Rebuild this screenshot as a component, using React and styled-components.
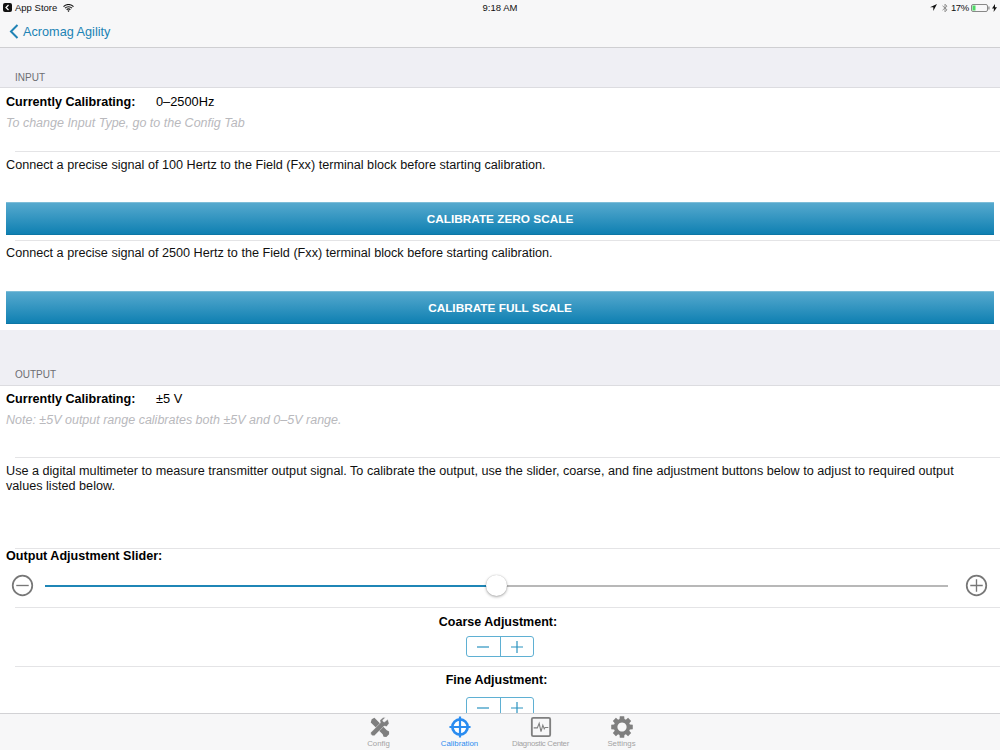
import React from "react";
import styled, { createGlobalStyle } from "styled-components";

const Global = createGlobalStyle`
  html, body { margin: 0; padding: 0; background: #fff; }
  body { font-family: "Liberation Sans", Arial, sans-serif; color: #000; }
`;

const Page = styled.div`
  width: 1000px; height: 750px; display: flex; flex-direction: column; overflow: hidden; background: #fff;
`;
const Header = styled.header`
  height: 47px; flex: none; background: #f7f7f8; border-bottom: 1px solid #cfcfd2; display: flex; flex-direction: column;
`;
const StatusBar = styled.div`
  height: 15px; display: grid; grid-template-columns: 1fr auto 1fr; align-items: center; padding: 0 3px; font-size: 9.5px; color: #111;
`;
const StatusGroup = styled.div`
  display: flex; align-items: center; gap: ${p => p.$gap || 3}px; justify-content: ${p => p.$end ? "flex-end" : "flex-start"};
`;
const NavBar = styled.div`
  flex: 1; display: flex; align-items: center; gap: 4px; padding: 1px 0 0 9px; color: #2083b5; font-size: 12.7px;
`;
const Content = styled.main`
  flex: 1; min-height: 0; overflow: hidden; display: flex; flex-direction: column;
`;
const SectionHeader = styled.div`
  flex: none; height: ${p => p.$h}px; background: #efeff4; border-bottom: 1px solid #dcdce0; display: flex; align-items: flex-end;
  padding: 0 15px ${p => p.$pb}px; box-sizing: border-box; font-size: 10px; color: #6d6d72; line-height: 12px;
`;
const Row = styled.div`
  flex: none; height: ${p => p.$h}px; box-sizing: border-box; padding: ${p => p.$pt || 0}px 6px 0;
  display: flex; flex-direction: column;
  ${p => p.$center && `align-items: center;`}
`;
const SliderBlock = styled.div`
  flex: none; height: 58px; display: flex; flex-direction: column;
`;
const Separator = styled.div`
  flex: none; height: 1px; margin-left: 15px; background: #e4e4e6;
`;
const CalLine = styled.div`
  display: flex; font-size: 12.8px; line-height: 16px;
`;
const Bold = styled.span`
  font-weight: 700; width: 150px; flex: none; font-size: 12.6px;
`;
const Note = styled.div`
  font-style: italic; font-size: 12.5px; line-height: 16px; color: #b9b9bd; margin-top: 5px;
`;
const Body = styled.div`
  font-size: 12.65px; line-height: 15px; color: #111; padding-right: 30px;
`;
const SliderTitle = styled.div`
  font-weight: 700; font-size: 12.6px; padding: 0 6px; line-height: 14px;
`;
const CalButton = styled.button`
  flex: none; display: block; width: 988px; height: 33px; margin: 0 6px; padding: 0; border: 0; border-top: 1px solid #7dbdd8;
  border-bottom: 1px solid #0d76a5; box-sizing: border-box;
  background: linear-gradient(#56a9ce, #0f80b2); color: #fff; font: 700 11.8px "Liberation Sans", Arial, sans-serif;
`;
const SliderRow = styled.div`
  display: flex; align-items: center; padding: 0 12px 0 11px; margin-top: 11px;
`;
const RoundIcon = styled.svg`
  width: 23px; height: 23px; flex: none;
`;
const Track = styled.div`
  flex: 1; height: 2px; background: #b8b8b8; position: relative; margin: 0 17px 0 11px;
`;
const Fill = styled.div`
  height: 100%; background: #1f86b6;
`;
const Thumb = styled.div`
  position: absolute; top: -10px; width: 21px; height: 21px; margin-left: -10.5px; border-radius: 50%; background: #fff;
  box-shadow: 0 1px 3px rgba(0,0,0,.35), 0 0 1px rgba(0,0,0,.2);
`;
const CenterTitle = styled.div`
  font-weight: 700; font-size: 12.5px; line-height: 15px; padding-right: ${p => p.$shift}px;
`;
const Stepper = styled.div`
  display: flex; width: 68px; height: 21px; flex: none; box-sizing: border-box; border: 1px solid #5fb0d3; border-radius: 3px;
  margin-top: ${p => p.$mt}px;
`;
const StepBtn = styled.div`
  flex: 1; display: flex; align-items: center; justify-content: center; & + & { border-left: 1px solid #5fb0d3; }
`;
const TabBar = styled.nav`
  flex: none; height: 37px; box-sizing: border-box; background: #f7f7f8; border-top: 1px solid #d2d2d5;
  display: flex; justify-content: center;
`;
const Tab = styled.div`
  width: 81px; display: flex; flex-direction: column; align-items: center; color: ${p => p.$active ? "#2a8cf0" : "#a3a3a3"};
  padding-top: 2px;
`;
const TabLabel = styled.span`
  font-size: 7.8px; line-height: 9px; white-space: nowrap; letter-spacing: ${p => p.$tight ? "-0.3px" : "0"};
`;
const TabIcon = styled.svg`
  width: 22px; height: 22px; display: block; margin-bottom: 1px;
`;

const Minus = () => <svg width="12" height="12" viewBox="0 0 12 12"><path d="M0 6h12" stroke="#2b93c0" strokeWidth="1.2"/></svg>;
const Plus = () => <svg width="12" height="12" viewBox="0 0 12 12"><path d="M0 6h12M6 0v12" stroke="#2b93c0" strokeWidth="1.2"/></svg>;
const StepperCtl = ({ mt }) => <Stepper $mt={mt}><StepBtn><Minus/></StepBtn><StepBtn><Plus/></StepBtn></Stepper>;

const gearPath = (() => {
  const n = 8, cx = 12, cy = 12, out = 12, inn = 9; let d = "";
  for (let i = 0; i < n; i++) {
    const a = (i / n) * Math.PI * 2 - Math.PI / 2, w = 0.2, w2 = 0.3;
    const pts = [[inn, a - w2], [out, a - w], [out, a + w], [inn, a + w2]];
    pts.forEach(([r, t], j) => { d += `${i === 0 && j === 0 ? "M" : "L"}${(cx + r * Math.cos(t)).toFixed(2)} ${(cy + r * Math.sin(t)).toFixed(2)}`; });
  }
  return d + "Z";
})();

export default function App() {
  return (
    <Page>
      <Global />
      <Header>
        <StatusBar>
          <StatusGroup>
            <svg width="9" height="9" viewBox="0 0 9 9"><rect width="9" height="9" rx="2" fill="#111"/><path d="M5.5 2L3 4.5 5.5 7" stroke="#fff" strokeWidth="1.2" fill="none"/></svg>
            <span>App Store</span>
            <svg width="11" height="8" viewBox="0 0 11 8" style={{marginLeft: 3}}><path d="M.5 2.6a7 7 0 0 1 10 0M2 4.200a5 5 0 0 1 7 0M3.600 5.700a2.600 2.600 0 0 1 3.800 0" stroke="#111" strokeWidth="1.1" fill="none"/><path d="M5.500 8L4.400 6.700a1.600 1.600 0 0 1 2.200 0z" fill="#111"/></svg>
          </StatusGroup>
          <span>9:18 AM</span>
          <StatusGroup $end $gap={2}>
            <svg width="7" height="7" viewBox="0 0 7 7"><path d="M7 0L0 3.200h3.300V7z" fill="#111"/></svg>
            <svg width="6" height="10" viewBox="0 0 6 10" style={{marginLeft: 3}}><path d="M.5 2.800L5 6.800 3 8.800V1.200L5 3.200.5 7.200" stroke="#888" strokeWidth=".9" fill="none"/></svg>
            <span style={{marginLeft: 1, letterSpacing: "-0.3px"}}>17%</span>
            <svg width="19" height="8" viewBox="0 0 19 8"><rect x=".5" y=".5" width="16" height="7" rx="1.500" fill="none" stroke="#888"/><rect x="1.500" y="1.500" width="3" height="5" fill="#4cd964"/><rect x="17.300" y="2.500" width="1.200" height="3" fill="#888"/></svg>
            <svg width="5" height="8" viewBox="0 0 5 8"><path d="M3 0L0 4.500h2L1.600 8 5 3.200H3z" fill="#111"/></svg>
          </StatusGroup>
        </StatusBar>
        <NavBar>
          <svg width="10" height="15" viewBox="0 0 10 15"><path d="M8.500 1L2 7.500 8.500 14" stroke="#2083b5" strokeWidth="2" fill="none"/></svg>
          <span>Acromag Agility</span>
        </NavBar>
      </Header>
      <Content>
        <SectionHeader $h={40} $pb={3}>INPUT</SectionHeader>
        <Row $h={63} $pt={6}>
          <CalLine><Bold>Currently Calibrating:</Bold><span>0–2500Hz</span></CalLine>
          <Note>To change Input Type, go to the Config Tab</Note>
        </Row>
        <Separator />
        <Row $h={50} $pt={6}><Body>Connect a precise signal of 100 Hertz to the Field (Fxx) terminal block before starting calibration.</Body></Row>
        <CalButton>CALIBRATE ZERO SCALE</CalButton>
        <Row $h={5} />
        <Separator />
        <Row $h={50} $pt={5}><Body>Connect a precise signal of 2500 Hertz to the Field (Fxx) terminal block before starting calibration.</Body></Row>
        <CalButton>CALIBRATE FULL SCALE</CalButton>
        <Row $h={6} />
        <SectionHeader $h={56} $pb={4}>OUTPUT</SectionHeader>
        <Row $h={71} $pt={5}>
          <CalLine><Bold>Currently Calibrating:</Bold><span>±5 V</span></CalLine>
          <Note>Note: ±5V output range calibrates both ±5V and 0–5V range.</Note>
        </Row>
        <Separator />
        <Row $h={90} $pt={6}><Body>Use a digital multimeter to measure transmitter output signal. To calibrate the output, use the slider, coarse, and fine adjustment buttons below to adjust to required output values listed below.</Body></Row>
        <Separator />
        <SliderBlock>
          <SliderTitle>Output Adjustment Slider:</SliderTitle>
          <SliderRow>
            <RoundIcon viewBox="0 0 24 24"><circle cx="12" cy="12" r="10.200" fill="none" stroke="#777" strokeWidth="1.800"/><path d="M5.500 12h13" stroke="#777" strokeWidth="1.400"/></RoundIcon>
            <Track><Fill style={{width: "50%"}}/><Thumb style={{left: "50%"}}/></Track>
            <RoundIcon viewBox="0 0 24 24"><circle cx="12" cy="12" r="10.200" fill="none" stroke="#777" strokeWidth="1.800"/><path d="M5.500 12h13M12 5.500v13" stroke="#777" strokeWidth="1.400"/></RoundIcon>
          </SliderRow>
        </SliderBlock>
        <Separator />
        <Row $h={58} $pt={7} $center><CenterTitle $shift={4}>Coarse Adjustment:</CenterTitle><StepperCtl mt={6}/></Row>
        <Separator />
        <Row $h={58} $pt={6} $center><CenterTitle $shift={7}>Fine Adjustment:</CenterTitle><StepperCtl mt={9}/></Row>
      </Content>
      <TabBar>
        <Tab>
          <TabIcon viewBox="0 0 24 24"><path d="M4 3.500l3-1.500 13.500 13.500 2.500 1.500 0 3-3 3-3-.5-1-2.500L3 7z" fill="#7f7f7f"/><path d="M21.500 3.500l-3.500 3-1.500-.5-.5-1.500 3-3-2.500 0-3.500 3 .5 3-10.500 10.500 0 2 2 1.500 2 0 10.500-10.500 3 .5 2.500-3.500z" fill="#7f7f7f" stroke="#f7f7f8" strokeWidth=".5"/></TabIcon>
          <TabLabel>Config</TabLabel>
        </Tab>
        <Tab $active>
          <TabIcon viewBox="0 0 24 24"><circle cx="12" cy="12" r="8.300" fill="#fff" stroke="#2a8cf0" strokeWidth="3"/><path d="M12 .5v23M.5 12h23" stroke="#2a8cf0" strokeWidth="2.400"/></TabIcon>
          <TabLabel>Calibration</TabLabel>
        </Tab>
        <Tab>
          <TabIcon viewBox="0 0 24 24"><rect x="2" y="2" width="20" height="20" rx="1.500" fill="none" stroke="#7f7f7f" strokeWidth="2"/><path d="M4 13h4l2-5 2 9 2-7 1.500 4 1-1.500H20" fill="none" stroke="#7f7f7f" strokeWidth="1.200"/></TabIcon>
          <TabLabel $tight>Diagnostic Center</TabLabel>
        </Tab>
        <Tab>
          <TabIcon viewBox="0 0 24 24"><path fillRule="evenodd" d={gearPath + "M12 7a5 5 0 1 0 .01 0z"} fill="#7f7f7f"/></TabIcon>
          <TabLabel>Settings</TabLabel>
        </Tab>
      </TabBar>
    </Page>
  );
}
